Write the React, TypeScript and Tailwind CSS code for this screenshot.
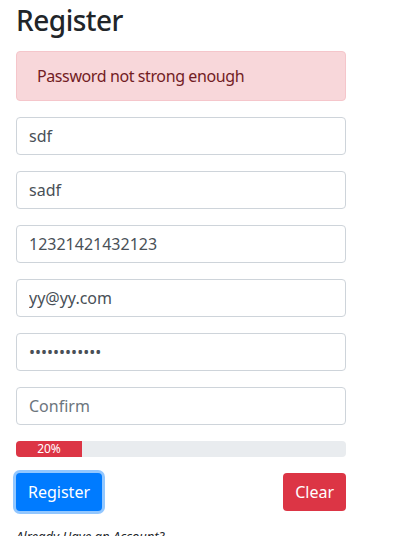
import React from "react";

const inputCls =
  "block w-full h-[38px] px-3 rounded-[4px] border border-[#ced4da] bg-white text-[16px] text-[#495057] placeholder:text-[#6c757d] outline-none";

export default function App() {
  return (
    <div
      className="w-[409px] min-h-[536px] bg-white px-4 pt-1 text-[#212529]"
      style={{ fontFamily: '"Noto Sans", "Open Sans", sans-serif' }}
    >
      <div className="w-[330px]">
        <h3 className="text-[28px] font-medium leading-[1.2] tracking-[-0.5px]">Register</h3>

        <div className="mt-[13px] mb-4 rounded-[4px] border border-[#f5c6cb] bg-[#f8d7da] px-5 py-3 text-[16px] leading-6 text-[#721c24] tracking-[-0.4px]">
          Password not strong enough
        </div>

        <form className="flex flex-col gap-4" onSubmit={(e) => e.preventDefault()}>
          <input className={inputCls} readOnly defaultValue="sdf" />
          <input className={inputCls} readOnly defaultValue="sadf" />
          <input className={inputCls} readOnly defaultValue="12321421432123" />
          <input className={inputCls} readOnly defaultValue="yy@yy.com" />
          <input className={inputCls} type="password" readOnly defaultValue="abcdefghijkl" />
          <input className={inputCls} placeholder="Confirm" />

          <div className="flex h-4 overflow-hidden rounded-[4px] bg-[#e9ecef] text-[12px] leading-4">
            <div className="w-[20%] bg-[#dc3545] text-center text-white">20%</div>
          </div>

          <div className="flex items-center justify-between">
            <button
              type="button"
              className="h-[38px] px-3 rounded-[4px] bg-[#007bff] text-white text-[16px] shadow-[0_0_0_3px_rgba(38,143,255,0.5)]"
            >
              Register
            </button>
            <button
              type="button"
              className="h-[38px] px-3 rounded-[4px] bg-[#dc3545] text-white text-[16px]"
            >
              Clear
            </button>
          </div>
        </form>

        <p className="mt-[16px] text-[13px] italic">Already Have an Account?</p>
      </div>
    </div>
  );
}
